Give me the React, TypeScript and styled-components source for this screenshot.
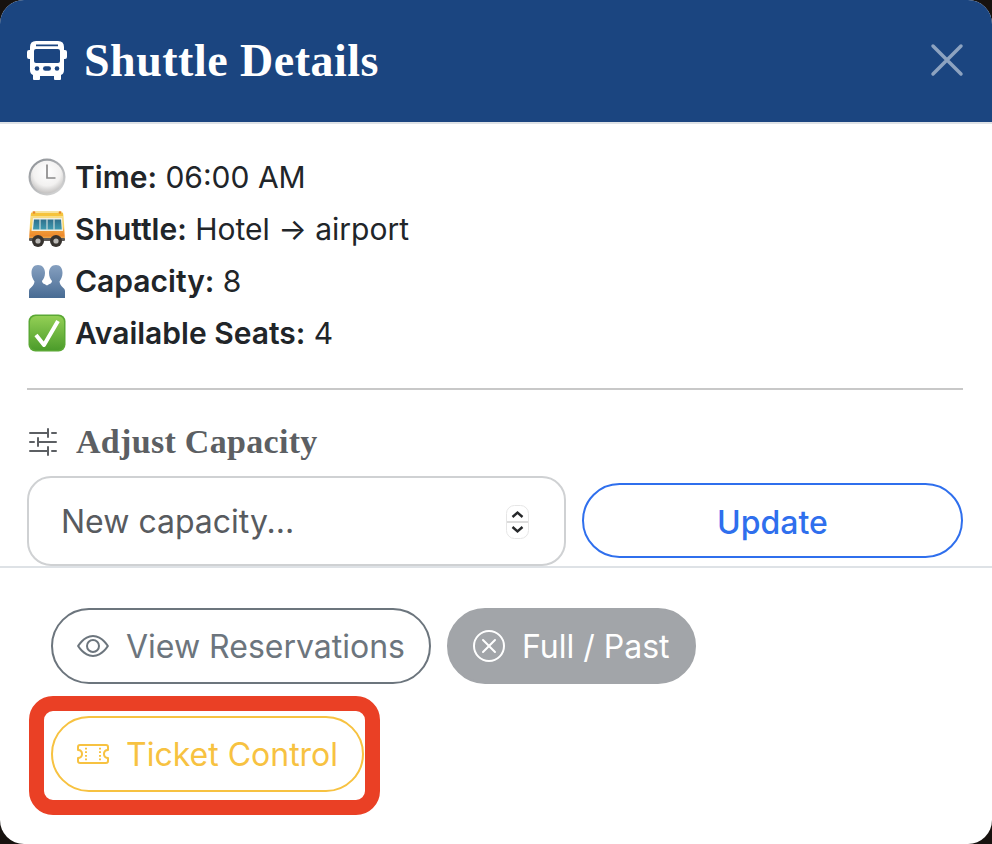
import styled, { createGlobalStyle } from 'styled-components';
import { BsEye, BsSliders2, BsTicketPerforated, BsXCircle } from 'react-icons/bs';

const GlobalStyle = createGlobalStyle`
  html, body {
    margin: 0;
    height: 100%;
    background: #17120f;
    font-family: Inter, "Liberation Sans", sans-serif;
  }
  * {
    box-sizing: border-box;
  }
`;

const Modal = styled.div`
  width: 992px;
  height: 844px;
  background: #fff;
  border-radius: 24px;
  overflow: hidden;
  display: flex;
  flex-direction: column;
`;

const Header = styled.header`
  height: 124px;
  flex-shrink: 0;
  background: #1b4580;
  border-bottom: 2px solid #dee2e6;
  padding: 0 28px 2px 27px;
  display: flex;
  align-items: center;
  color: #fff;
`;

const Title = styled.h1`
  margin: 0;
  flex: 1;
  display: flex;
  align-items: center;
  gap: 17px;
  font-family: "Liberation Serif", serif;
  font-size: 46px;
  font-weight: 700;
  letter-spacing: 0.5px;

  svg {
    width: 40px;
    height: 40px;
  }
`;

const CloseButton = styled.button`
  width: 34px;
  height: 34px;
  padding: 0;
  border: 0;
  background: none;
  color: #8da3c0;
  display: block;
`;

const Body = styled.div`
  height: 442px;
  flex-shrink: 0;
  padding: 27px 29px 0 27px;
`;

const InfoRow = styled.div`
  height: 52px;
  display: flex;
  align-items: center;
  gap: 9px;
  font-size: 30px;
  color: #212529;

  b {
    font-weight: 600;
  }
`;

const Divider = styled.hr`
  margin: 29px 0 0;
  border: 0;
  border-top: 2px solid #c8c8c8;
`;

const SectionTitle = styled.h2`
  margin: 34px 0 0;
  height: 36px;
  display: flex;
  align-items: center;
  gap: 17px;
  font-family: "Liberation Serif", serif;
  font-size: 34px;
  font-weight: 700;
  letter-spacing: 0.3px;
  color: #5c5f63;

  svg {
    width: 32px;
    height: 32px;
  }
`;

const CapacityForm = styled.div`
  margin-top: 16px;
  display: grid;
  grid-template-columns: 539px 381px;
  gap: 16px;
  align-items: start;
`;

const InputWrap = styled.div`
  position: relative;
  height: 90px;
`;

const CapacityInput = styled.input`
  width: 100%;
  height: 100%;
  padding: 0 32px;
  border: 2px solid #cfd1d3;
  border-radius: 24px;
  background: #fff;
  font: 400 32px Inter, "Liberation Sans", sans-serif;
  color: #212529;
  outline: none;

  &::placeholder {
    color: #585b5f;
    opacity: 1;
  }
`;

const Spinner = styled.svg`
  position: absolute;
  right: 37px;
  top: 29px;
  width: 23px;
  height: 34px;
`;

const UpdateButton = styled.button`
  height: 75px;
  margin-top: 7px;
  padding: 3px 0 0;
  border: 2px solid #2f6fed;
  border-radius: 38px;
  background: #fff;
  color: #2f6fed;
  font: 500 32px Inter, "Liberation Sans", sans-serif;
`;

const Footer = styled.footer`
  flex: 1;
  border-top: 2px solid #dee2e6;
  padding: 40px 28px 0 51px;
  display: flex;
  flex-wrap: wrap;
  align-content: flex-start;
  gap: 32px 16px;
`;

const PillButton = styled.button<{ $tone: 'outline' | 'disabled' | 'warning' }>`
  height: 76px;
  padding: 0 24px;
  display: inline-flex;
  align-items: center;
  gap: 17px;
  border-radius: 38px;
  font: 400 32px Inter, "Liberation Sans", sans-serif;
  border: 2px solid
    ${(p) => (p.$tone === 'outline' ? '#6c757d' : p.$tone === 'warning' ? '#f7c241' : '#a2a5a9')};
  background: ${(p) => (p.$tone === 'disabled' ? '#a2a5a9' : '#fff')};
  color: ${(p) => (p.$tone === 'outline' ? '#6c757d' : p.$tone === 'warning' ? '#f7c241' : '#fff')};

  svg {
    width: 32px;
    height: 32px;
  }
`;

const Highlighted = styled.div`
  position: relative;
  flex-basis: 100%;
  display: flex;
`;

const HighlightFrame = styled.div`
  position: absolute;
  left: -22px;
  top: -20px;
  width: 351px;
  height: 119px;
  border: 15px solid #ea4025;
  border-radius: 24px;
  pointer-events: none;
`;

const EmojiIcon = styled.svg`
  width: 38px;
  height: 38px;
  margin-left: 1px;
  flex-shrink: 0;
`;

function BusIcon() {
  return (
    <svg viewBox="0 0 40 40">
      <path
        fill="#fff"
        fillRule="evenodd"
        d="M9 1h22q6 0 6 6v3h1q2 0 2 2v5q0 2-2 2h-1v11q0 4-3 5v4q0 1-1 1h-5q-1 0-1-1v-3H13v3q0 1-1 1H7q-1 0-1-1v-4q-3-1-3-5V19H2q-2 0-2-2v-5q0-2 2-2h1V7q0-6 6-6zM9 4.500v1.800h22V4.500zM9 9q-2 0-2 2v10q0 2 2 2h22q2 0 2-2V11q0-2-2-2z"
      />
      <circle cx="10" cy="28.500" r="2.300" fill="#1b4580" />
      <rect x="16" y="26.200" width="8" height="4.600" rx="2.300" fill="#1b4580" />
      <circle cx="30" cy="28.500" r="2.300" fill="#1b4580" />
    </svg>
  );
}

function ClockEmoji() {
  return (
    <EmojiIcon viewBox="0 0 38 38">
      <defs>
        <linearGradient id="clockRim" x1="0.150" y1="0" x2="0.850" y2="1">
          <stop offset="0%" stopColor="#8d9196" />
          <stop offset="100%" stopColor="#d8d8d8" />
        </linearGradient>
        <radialGradient id="clockFace" cx="50%" cy="35%" r="65%">
          <stop offset="0%" stopColor="#fff" />
          <stop offset="65%" stopColor="#f2f1f0" />
          <stop offset="100%" stopColor="#c4c2c1" />
        </radialGradient>
      </defs>
      <circle cx="19" cy="19" r="18.500" fill="url(#clockRim)" />
      <circle cx="19" cy="19" r="16.300" fill="url(#clockFace)" />
      <path d="M19 6.500V20h8.500" fill="none" stroke="#8b8a8a" strokeWidth="1.700" />
    </EmojiIcon>
  );
}

function BusEmoji() {
  return (
    <EmojiIcon viewBox="0 0 38 38">
      <defs>
        <linearGradient id="busBody" x1="0" y1="0" x2="0" y2="1">
          <stop offset="0%" stopColor="#f7e3a0" />
          <stop offset="55%" stopColor="#f8d25a" />
          <stop offset="70%" stopColor="#f09a38" />
          <stop offset="85%" stopColor="#ee8a2c" />
          <stop offset="100%" stopColor="#e8c26a" />
        </linearGradient>
        <linearGradient id="busGlass" x1="0" y1="0" x2="0" y2="1">
          <stop offset="0%" stopColor="#2f6f8c" />
          <stop offset="100%" stopColor="#3f9bb0" />
        </linearGradient>
      </defs>
      <path d="M6 1h26q3 0 3.500 4L37 30H1L2.500 5Q3 1 6 1z" fill="url(#busBody)" />
      <rect x="3" y="3" width="32" height="3" fill="#f5c33c" />
      <circle cx="6" cy="2.500" r="1.300" fill="#e8862c" />
      <circle cx="32" cy="2.500" r="1.300" fill="#e8862c" />
      <path d="M5 8h29l1 13H3.500z" fill="#f4efe0" />
      <path d="M6 9.500h27l0.800 10H5z" fill="url(#busGlass)" />
      <path d="M12 9v11M19 9v11M26 9v11" stroke="#cfdcdc" strokeWidth="1.200" />
      <rect x="1" y="28" width="36" height="3" rx="1" fill="#5d5a58" />
      <circle cx="10" cy="31" r="6" fill="#37332f" />
      <circle cx="10" cy="31" r="2.600" fill="#b9b7b4" />
      <circle cx="28" cy="31" r="6" fill="#37332f" />
      <circle cx="28" cy="31" r="2.600" fill="#b9b7b4" />
    </EmojiIcon>
  );
}

function PeopleEmoji() {
  return (
    <EmojiIcon viewBox="0 0 38 38">
      <defs>
        <linearGradient id="peopleFill" x1="0" y1="0" x2="0" y2="1">
          <stop offset="0%" stopColor="#86a0c0" />
          <stop offset="100%" stopColor="#486b93" />
        </linearGradient>
      </defs>
      <path
        d="M10 3c4.500 0 7 3.500 7 8 0 3.500-1.500 6.500-3 8 0 2.500 3 3 5 4.500V36H1v-7c0-3.500 5-4 5.500-9.500C5 17.500 3.500 14.500 3.500 11 3.500 6.500 5.500 3 10 3z"
        fill="url(#peopleFill)"
      />
      <path
        d="M28 3c-4.500 0-7 3.500-7 8 0 3.500 1.500 6.500 3 8 0 2.500-3 3-5 4.500V36h18v-7c0-3.500-5-4-5.500-9.500 1.500-2 3-5 3-8.500 0-4.500-2-8-6.500-8z"
        fill="url(#peopleFill)"
      />
    </EmojiIcon>
  );
}

function CheckEmoji() {
  return (
    <EmojiIcon viewBox="0 0 38 38">
      <defs>
        <linearGradient id="checkFill" x1="0" y1="0" x2="0" y2="1">
          <stop offset="0%" stopColor="#93cf55" />
          <stop offset="100%" stopColor="#4c9c2b" />
        </linearGradient>
      </defs>
      <rect x="0.500" y="0.500" width="37" height="37" rx="7" fill="#5aa834" />
      <rect x="2" y="2" width="34" height="34" rx="6" fill="url(#checkFill)" />
      <path d="M8 21l8 10L30 7" fill="none" stroke="#fff" strokeWidth="4" strokeLinejoin="round" />
    </EmojiIcon>
  );
}

export default function App() {
  return (
    <>
      <GlobalStyle />
      <Modal>
        <Header>
          <Title>
            <BusIcon />
            Shuttle Details
          </Title>
          <CloseButton aria-label="Close">
            <svg viewBox="0 0 34 34" width="34" height="34">
              <path d="M3 3l28 28M31 3L3 31" stroke="currentColor" strokeWidth="3.500" strokeLinecap="round" />
            </svg>
          </CloseButton>
        </Header>

        <Body>
          <InfoRow>
            <ClockEmoji />
            <span>
              <b>Time:</b> 06:00 AM
            </span>
          </InfoRow>
          <InfoRow>
            <BusEmoji />
            <span>
              <b>Shuttle:</b> Hotel → airport
            </span>
          </InfoRow>
          <InfoRow>
            <PeopleEmoji />
            <span>
              <b>Capacity:</b> 8
            </span>
          </InfoRow>
          <InfoRow>
            <CheckEmoji />
            <span>
              <b>Available Seats:</b> 4
            </span>
          </InfoRow>

          <Divider />

          <SectionTitle>
            <BsSliders2 />
            Adjust Capacity
          </SectionTitle>

          <CapacityForm>
            <InputWrap>
              <CapacityInput placeholder="New capacity..." />
              <Spinner viewBox="0 0 23 34">
                <rect x="0.500" y="0.500" width="22" height="33" rx="8" fill="#fff" stroke="#e6e6e6" />
                <path d="M1 17h21" stroke="#dcdcdc" strokeWidth="2" />
                <path d="M6.500 12l5-4.500 5 4.500M6.500 22l5 4.500 5-4.500" fill="none" stroke="#26282a" strokeWidth="2.400" />
              </Spinner>
            </InputWrap>
            <UpdateButton>Update</UpdateButton>
          </CapacityForm>
        </Body>

        <Footer>
          <PillButton $tone="outline">
            <BsEye />
            View Reservations
          </PillButton>
          <PillButton $tone="disabled">
            <BsXCircle />
            Full / Past
          </PillButton>
          <Highlighted>
            <PillButton $tone="warning">
              <BsTicketPerforated />
              Ticket Control
            </PillButton>
            <HighlightFrame />
          </Highlighted>
        </Footer>
      </Modal>
    </>
  );
}
